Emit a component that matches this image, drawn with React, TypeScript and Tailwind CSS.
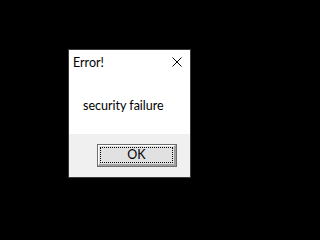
export default function App() {
  return (
    <div className="w-full min-h-screen bg-black pt-[49px] pl-[68px] font-['Lato','Noto_Sans',sans-serif] text-black">
      <div className="w-[123px] h-[129px] border border-[#3a3a3a] bg-white flex flex-col">
        {/* title bar */}
        <div className="h-[26px] flex items-start justify-between">
          <span className="pl-[4px] pt-[6px] text-[12.5px] leading-[14px]">Error!</span>
          <svg className="mt-[7px] mr-[8px]" width="10" height="10" viewBox="0 0 10 10">
            <path d="M0.5 0.5 L9.5 9.5 M9.5 0.5 L0.5 9.5" stroke="#000" strokeWidth="1" fill="none" />
          </svg>
        </div>
        <div className="flex-1 pl-[14px] pt-[23px] text-[12.5px] leading-[14px]">security failure</div>
        {/* footer */}
        <div className="h-[43px] bg-[#f0f0f0] flex items-center justify-end pr-[13px]">
          <button className="w-[80px] h-[23px] border border-[#6d6d6d] bg-[#e1e1e1] p-0 flex">
            <div className="flex-1 border-t border-l border-white border-b-2 border-r-2 border-b-[#a0a0a0] border-r-[#a0a0a0] p-[1px] flex">
              <div className="flex-1 border border-dotted border-black flex items-center justify-center text-[12.5px] leading-[14px]">
                OK
              </div>
            </div>
          </button>
        </div>
      </div>
    </div>
  );
}
